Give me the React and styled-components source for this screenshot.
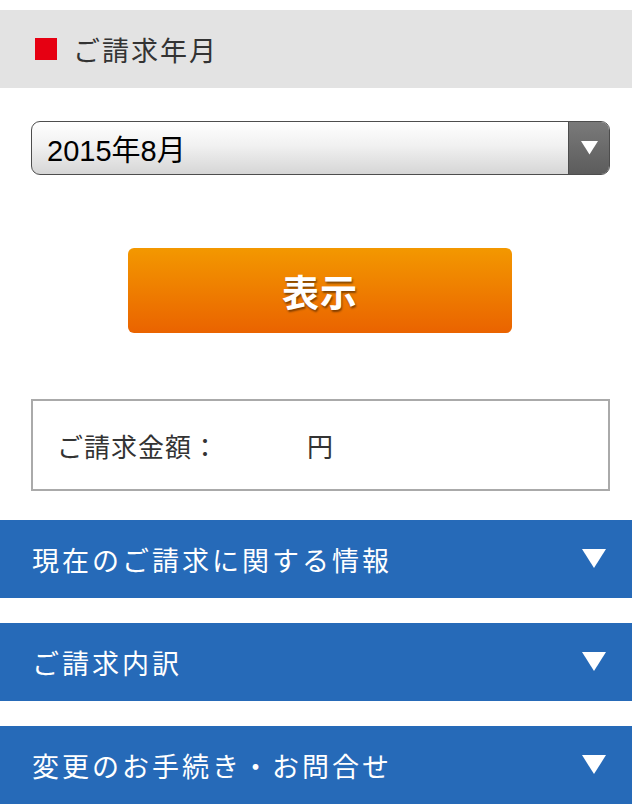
import React from "react";
import styled, { createGlobalStyle } from "styled-components";

const GlobalStyle = createGlobalStyle`
  body {
    margin: 0;
    background: #ffffff;
    font-family: "Noto Sans CJK JP", "Noto Sans", sans-serif;
  }
`;

const sections = [
  "現在のご請求に関する情報",
  "ご請求内訳",
  "変更のお手続き・お問合せ",
];

const Triangle = ({ size = 24, color = "#ffffff" }) => (
  <svg width={size} height={size * 0.8} viewBox="0 0 24 19">
    <polygon points="0,0 24,0 12,19" fill={color} />
  </svg>
);

const Billing = () => {
  return (
    <Page>
      <GlobalStyle />
      {/* heading for the month picker */}
      <SectionHead>
        <Marker />
        <h2>ご請求年月</h2>
      </SectionHead>

      <SelectBox>
        <div className="select-value">2015年8月</div>
        <div className="select-arrow">
          <Triangle size={17} />
        </div>
      </SelectBox>

      <ShowButton type="button">表示</ShowButton>

      <AmountBox>
        ご請求金額：<span className="amount-value"></span>円
      </AmountBox>

      <Bars>
        {sections.map((label) => (
          <Bar key={label}>
            <span>{label}</span>
            <Triangle size={24} />
          </Bar>
        ))}
      </Bars>
    </Page>
  );
};

export default Billing;

const Page = styled.div`
  width: 632px;
  padding-top: 10px;
  display: flex;
  flex-direction: column;
`;

const SectionHead = styled.div`
  height: 78px;
  background: #e3e3e3;
  display: flex;
  align-items: center;
  padding-left: 35px;
  gap: 16px;

  h2 {
    margin: 0;
    font-size: 27px;
    font-weight: 400;
    letter-spacing: 2px;
    color: #333333;
  }
`;

const Marker = styled.div`
  width: 22px;
  height: 22px;
  background: #e60012;
`;

const SelectBox = styled.div`
  margin: 33px 22px 0 31px;
  height: 54px;
  box-sizing: border-box;
  border: 1.5px solid #4d4d4d;
  border-radius: 9px;
  overflow: hidden;
  display: flex;
  background: linear-gradient(#ffffff, #f1f1f1 45%, #d6d6d6);

  .select-value {
    flex: 1;
    display: flex;
    align-items: center;
    padding-left: 15px;
    font-family: "Liberation Sans", "Noto Sans CJK JP", sans-serif;
    font-size: 29px;
    color: #000000;
  }

  .select-arrow {
    width: 40px;
    display: flex;
    align-items: center;
    justify-content: center;
    background: linear-gradient(#7a7a7a, #5c5c5c);
    border-left: 1px solid #4d4d4d;
  }
`;

const ShowButton = styled.button`
  margin: 73px 0 0 128px;
  width: 384px;
  height: 85px;
  border: none;
  border-radius: 6px;
  background: linear-gradient(#f39800, #ea6300);
  color: #ffffff;
  font-family: "Noto Sans CJK JP", sans-serif;
  font-size: 37px;
  font-weight: 700;
  letter-spacing: 1px;
  text-shadow: 1px 2px 2px rgba(0, 0, 0, 0.45);
  cursor: pointer;
`;

const AmountBox = styled.div`
  margin: 66px 22px 0 31px;
  height: 92px;
  box-sizing: border-box;
  border: 2px solid #aaaaaa;
  display: flex;
  align-items: center;
  padding-left: 24px;
  font-size: 26px;
  letter-spacing: 1px;
  color: #333333;

  .amount-value {
    display: inline-block;
    width: 88px;
  }
`;

const Bars = styled.div`
  margin-top: 29px;
  display: flex;
  flex-direction: column;
  gap: 25px;
`;

const Bar = styled.div`
  height: 78px;
  background: #266ab8;
  display: flex;
  align-items: center;
  justify-content: space-between;
  padding: 0 26px 0 32px;
  color: #ffffff;
  font-size: 27px;
  letter-spacing: 3px;
`;
